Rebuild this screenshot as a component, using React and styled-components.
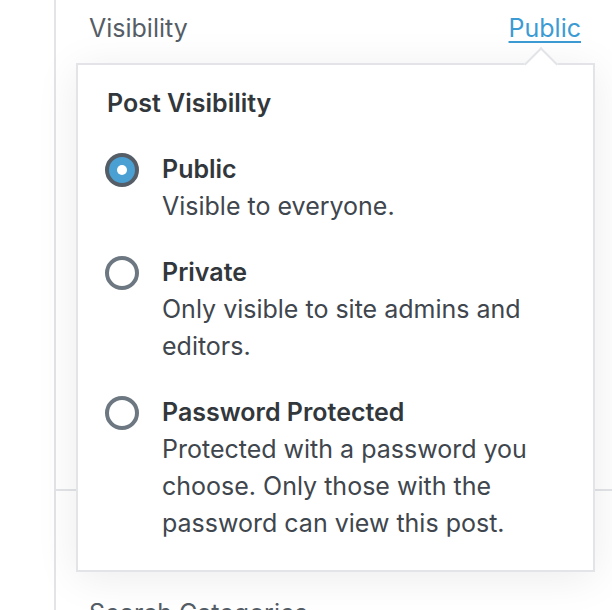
import React from "react";
import styled, { createGlobalStyle } from "styled-components";

const Global = createGlobalStyle`
  html, body { margin: 0; padding: 0; background: #fff; }
  body { font-family: Inter, "Noto Sans", "Liberation Sans", sans-serif; overflow: hidden; }
`;

const Page = styled.div`
  display: flex;
  width: 612px;
  height: 610px;
  overflow: hidden;
`;

const Gutter = styled.div`
  width: 54px;
  flex: none;
  border-right: 2px solid #e2e4e7;
`;

const Sidebar = styled.div`
  flex: 1;
  display: flex;
  flex-direction: column;
`;

const Panel = styled.div`
  position: relative;
  flex: none;
  height: 479px;
  padding: 10px 31px 0 33px;
  border-bottom: 2px solid #e2e4e7;
`;

const Row = styled.div`
  display: flex;
  justify-content: space-between;
  align-items: center;
  font-size: 25px;
  line-height: 37px;
  color: #555d66;
`;

const LinkButton = styled.a`
  color: #3d9bd4;
  text-decoration: underline;
  text-underline-offset: 4px;
  text-decoration-thickness: 2px;
  cursor: pointer;
`;

const Popover = styled.div`
  position: absolute;
  left: 20px;
  top: 63px;
  width: 519px;
  box-sizing: border-box;
  background: #fff;
  border: 2px solid #e2e4e7;
  box-shadow: 0 6px 40px rgba(0, 0, 0, 0.08);
  padding: 20px 28px 28px 29px;
  z-index: 2;
`;

const Arrow = styled.div`
  position: absolute;
  top: -13px;
  right: 40px;
  width: 22px;
  height: 22px;
  background: #fff;
  border-top: 2px solid #e2e4e7;
  border-left: 2px solid #e2e4e7;
  transform: rotate(45deg);
`;

const Heading = styled.div`
  font-size: 25px;
  line-height: 37px;
  font-weight: 600;
  color: #32373c;
  margin-bottom: 29px;
`;

const Options = styled.div`
  display: flex;
  flex-direction: column;
  gap: 29px;
`;

const Option = styled.label`
  display: flex;
  gap: 23px;
  align-items: flex-start;
  cursor: pointer;
`;

const Radio = styled.span`
  flex: none;
  width: 34px;
  height: 34px;
  box-sizing: border-box;
  margin-top: 2px;
  margin-left: -2px;
  border-radius: 50%;
  border: 4px solid ${(p) => (p.$checked ? "#555d66" : "#6c7781")};
  background: ${(p) => (p.$checked ? "#4aa0d3" : "#fff")};
  display: flex;
  align-items: center;
  justify-content: center;
  &::after {
    content: "";
    display: ${(p) => (p.$checked ? "block" : "none")};
    width: 10px;
    height: 10px;
    border-radius: 50%;
    background: #fff;
  }
`;

const OptionText = styled.div`
  display: flex;
  flex-direction: column;
  font-size: 25px;
  line-height: 37px;
`;

const OptionTitle = styled.span`
  font-weight: 600;
  color: #32373c;
`;

const OptionDesc = styled.span`
  color: #40464d;
`;

const NextPanel = styled.div`
  flex: none;
  padding: 104px 0 0 33px;
  font-size: 25px;
  line-height: 37px;
  color: #555d66;
`;

const options = [
  { title: "Public", desc: "Visible to everyone.", checked: true },
  { title: "Private", desc: "Only visible to site admins and editors." },
  {
    title: "Password Protected",
    desc: "Protected with a password you choose. Only those with the password can view this post.",
  },
];

export default function App() {
  return (
    <Page>
      <Global />
      <Gutter />
      <Sidebar>
        <Panel>
          <Row>
            <span>Visibility</span>
            <LinkButton>Public</LinkButton>
          </Row>
          <Popover>
            <Arrow />
            <Heading>Post Visibility</Heading>
            <Options>
              {options.map((o) => (
                <Option key={o.title}>
                  <Radio $checked={o.checked} />
                  <OptionText>
                    <OptionTitle>{o.title}</OptionTitle>
                    <OptionDesc>{o.desc}</OptionDesc>
                  </OptionText>
                </Option>
              ))}
            </Options>
          </Popover>
        </Panel>
        <NextPanel>Search Categories</NextPanel>
      </Sidebar>
    </Page>
  );
}
